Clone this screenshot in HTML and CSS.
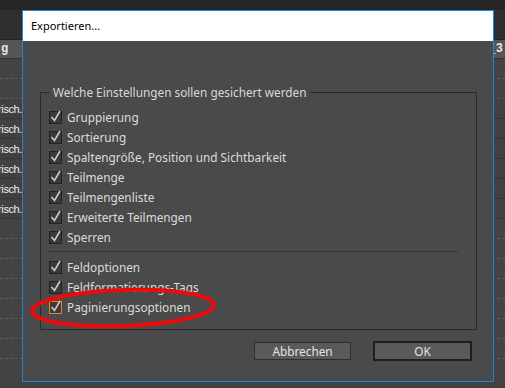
FILE: index.html
```html
<!DOCTYPE html>
<html lang="de">
<head>
<meta charset="utf-8">
<title>Exportieren</title>
<link rel="stylesheet" href="styles.css">
</head>
<body>
<div class="app">
  <div class="topbar"></div>
  <div class="toolbar"></div>
  <div class="grid">
    <div class="hdr"><span class="hcell">g</span><span class="hcell hright">_3</span></div>
    <div class="row dash"></div>
    <div class="row dash"></div>
    <div class="row data"><span class="cell">risch.</span></div>
    <div class="row data"><span class="cell">risch.</span></div>
    <div class="row data"><span class="cell">risch.</span></div>
    <div class="row data"><span class="cell">risch.</span></div>
    <div class="row data"><span class="cell">risch.</span></div>
    <div class="row data"><span class="cell">risch.</span></div>
    <div class="row dash"></div>
    <div class="row dash"></div>
    <div class="row dash"></div>
    <div class="row dash"></div>
    <div class="row dash"></div>
    <div class="row dash"></div>
    <div class="row dash"></div>
  </div>

  <div class="dialog">
    <div class="title">Exportieren...</div>
    <div class="body">
      <fieldset class="group">
        <legend class="legend">Welche Einstellungen sollen gesichert werden</legend>
        <div class="opts">
          <label class="opt"><svg class="cb" viewBox="0 0 13 13"><rect x="0.5" y="0.5" width="12" height="12" class="box"/><polyline points="2.5,6 5.5,9.5 11,0" class="chk"/></svg>Gruppierung</label>
          <label class="opt"><svg class="cb" viewBox="0 0 13 13"><rect x="0.5" y="0.5" width="12" height="12" class="box"/><polyline points="2.5,6 5.5,9.5 11,0" class="chk"/></svg>Sortierung</label>
          <label class="opt"><svg class="cb" viewBox="0 0 13 13"><rect x="0.5" y="0.5" width="12" height="12" class="box"/><polyline points="2.5,6 5.5,9.5 11,0" class="chk"/></svg>Spaltengröße, Position und Sichtbarkeit</label>
          <label class="opt"><svg class="cb" viewBox="0 0 13 13"><rect x="0.5" y="0.5" width="12" height="12" class="box"/><polyline points="2.5,6 5.5,9.5 11,0" class="chk"/></svg>Teilmenge</label>
          <label class="opt"><svg class="cb" viewBox="0 0 13 13"><rect x="0.5" y="0.5" width="12" height="12" class="box"/><polyline points="2.5,6 5.5,9.5 11,0" class="chk"/></svg>Teilmengenliste</label>
          <label class="opt"><svg class="cb" viewBox="0 0 13 13"><rect x="0.5" y="0.5" width="12" height="12" class="box"/><polyline points="2.5,6 5.5,9.5 11,0" class="chk"/></svg>Erweiterte Teilmengen</label>
          <label class="opt"><svg class="cb" viewBox="0 0 13 13"><rect x="0.5" y="0.5" width="12" height="12" class="box"/><polyline points="2.5,6 5.5,9.5 11,0" class="chk"/></svg>Sperren</label>
          <div class="sep"></div>
          <label class="opt"><svg class="cb" viewBox="0 0 13 13"><rect x="0.5" y="0.5" width="12" height="12" class="box"/><polyline points="2.5,6 5.5,9.5 11,0" class="chk"/></svg>Feldoptionen</label>
          <label class="opt"><svg class="cb" viewBox="0 0 13 13"><rect x="0.5" y="0.5" width="12" height="12" class="box"/><polyline points="2.5,6 5.5,9.5 11,0" class="chk"/></svg>Feldformatierungs-Tags</label>
          <label class="opt"><svg class="cb" viewBox="0 0 13 13"><rect x="0.5" y="0.5" width="12" height="12" class="box focus"/><polyline points="2.5,6 5.5,9.5 11,0" class="chk"/></svg>Paginierungsoptionen</label>
        </div>
      </fieldset>
      <div class="buttons">
        <button class="btn">Abbrechen</button>
        <button class="btn default">OK</button>
      </div>
    </div>
  </div>

  <svg class="annot" width="505" height="388" viewBox="0 0 505 388">
    <ellipse cx="123" cy="308" rx="91" ry="18" transform="rotate(-2 123 308)" class="ring"/>
  </svg>
</div>
</body>
</html>
```

FILE: styles.css
```css
* { box-sizing: border-box; }
html, body { margin: 0; padding: 0; }
body {
  width: 505px;
  height: 388px;
  overflow: hidden;
  background: #434343;
  font-family: "Noto Sans", "Open Sans", sans-serif;
  font-size: 11.8px;
}
.app { position: relative; width: 505px; height: 388px; }
.topbar { height: 10px; background: #262626; }
.toolbar { height: 30px; background: #2f2f2f; border-bottom: 1px solid #232323; }
.grid { display: flex; flex-direction: column; }
.hdr {
  height: 19px;
  background: #555555;
  border-bottom: 1px solid #333;
  display: flex;
  justify-content: space-between;
  align-items: center;
  color: #e6e6e6;
  font-family: "Liberation Mono", monospace;
  font-size: 12px;
  font-weight: bold;
}
.hcell { padding-left: 1px; }
.hright { padding-right: 2px; }
.row {
  height: 20px;
  display: flex;
  align-items: center;
}
.dash { border-bottom: 1px dashed #5c5c5c; }
.data { border-bottom: 1px solid #363636; background: #414141; }
.cell {
  width: 22px;
  display: flex;
  justify-content: flex-end;
  white-space: nowrap;
  color: #f0f0f0;
  font-family: "Liberation Sans", sans-serif;
  font-size: 11px;
  letter-spacing: -0.4px;
}

.dialog {
  position: absolute;
  left: 22px;
  top: 10px;
  width: 472px;
  height: 372px;
  border: 1px solid #1e86d9;
  background: #4a4a4a;
  display: flex;
  flex-direction: column;
}
.title {
  height: 30px;
  flex: none;
  background: #ffffff;
  color: #000;
  line-height: 30px;
  padding-left: 8px;
  font-size: 11px;
}
.body {
  flex: 1;
  padding: 0 16px 0 17px;
  display: flex;
  flex-direction: column;
  color: #dcdcdc;
}
.group {
  margin: 43px 0 0;
  padding: 0;
  border: 1px solid #2b2b2b;
  min-width: 0;
}
.legend {
  margin-left: 9px;
  padding: 0 3px;
  line-height: 16px;
  color: #d8d8d8;
}
.opts { padding: 7px 0 12px; display: flex; flex-direction: column; }
.opt {
  height: 20px;
  display: flex;
  align-items: center;
  gap: 5px;
  padding-left: 8px;
  color: #dcdcdc;
}
.cb { width: 13px; height: 13px; overflow: visible; flex: none; }
.box { fill: #3a3a3a; stroke: #222222; stroke-width: 1; }
.box.focus { stroke: #e4892b; }
.chk { fill: none; stroke: #d0d0d0; stroke-width: 1.5; stroke-linejoin: miter; }
.sep {
  height: 1px;
  background: #363636;
  margin: 4px 18px 5px 7px;
}
.buttons {
  margin-top: 12px;
  margin-right: 6px;
  display: flex;
  justify-content: flex-end;
  gap: 23px;
}
.btn {
  width: 97px;
  height: 18px;
  padding: 0;
  border: 1px solid #2f2f2f;
  background: #5a5a5a;
  color: #e4e4e4;
  font-family: "Noto Sans", "Open Sans", sans-serif;
  font-size: 11.8px;
  line-height: 16px;
}
.btn.default {
  border-color: #1e1e1e;
  box-shadow: 0 0 0 1px #1e1e1e;
}
.annot { position: absolute; left: 0; top: 0; pointer-events: none; }
.ring { fill: none; stroke: #ec0a0a; stroke-width: 4; }
```
